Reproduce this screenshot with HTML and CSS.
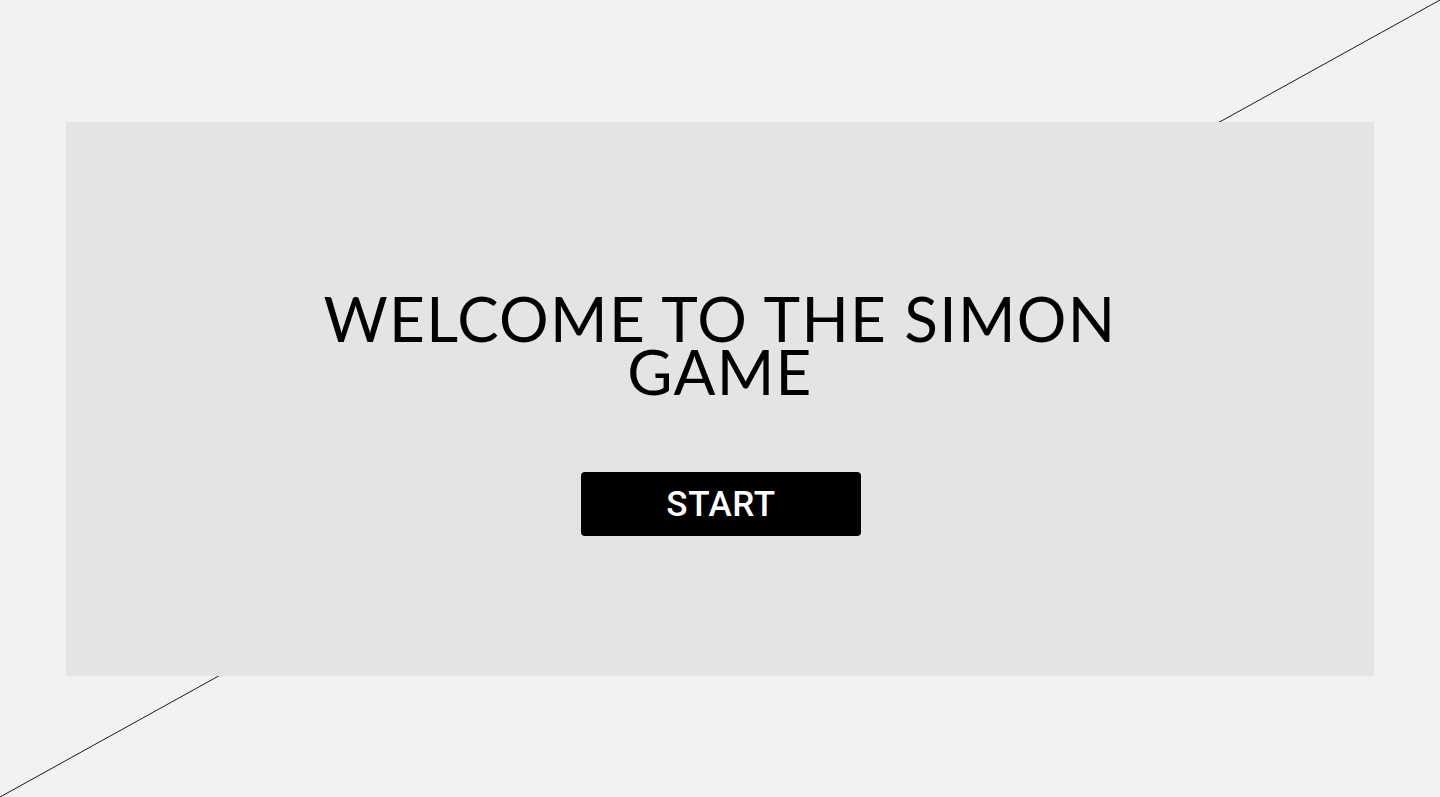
FILE: index.html
```html
<!DOCTYPE html>
<html lang="en">
<head>
<meta charset="utf-8">
<title>Simon Game</title>
<link rel="stylesheet" href="styles.css">
</head>
<body>
<svg class="diagonal" viewBox="0 0 1440 797" preserveAspectRatio="none" aria-hidden="true">
  <line x1="0" y1="797" x2="1440" y2="0" stroke="#1a1a1a" stroke-width="1"/>
</svg>
<main class="page">
  <section class="card">
    <h1 class="title">WELCOME TO THE SIMON<br>GAME</h1>
    <button class="start-btn" type="button">START</button>
  </section>
</main>
</body>
</html>
```
FILE: styles.css
```css
html, body {
  margin: 0;
  padding: 0;
}
body {
  background: #f2f2f2;
  width: 1440px;
  height: 797px;
  overflow: hidden;
  position: relative;
}
.diagonal {
  position: absolute;
  left: 0;
  top: 0;
  width: 1440px;
  height: 797px;
  z-index: 0;
}
.page {
  position: relative;
  z-index: 1;
  box-sizing: border-box;
  height: 797px;
  padding: 122px 66px 121px;
  display: flex;
}
.card {
  flex: 1;
  background: #e4e4e4;
  display: flex;
  flex-direction: column;
  align-items: center;
  padding-top: 170px;
}
.title {
  margin: 0;
  font-family: "Lato", "Liberation Sans", sans-serif;
  font-weight: 400;
  font-size: 62px;
  line-height: 53px;
  color: #000;
  text-align: center;
  letter-spacing: 1.3px;
}
.start-btn {
  margin-top: 74px;
  margin-left: 2px;
  width: 280px;
  height: 64px;
  border: none;
  border-radius: 4px;
  background: #000;
  color: #fff;
  font-family: "Roboto", "Liberation Sans", sans-serif;
  font-weight: 500;
  font-size: 35px;
  letter-spacing: 0.6px;
  padding: 0;
  cursor: pointer;
}
```
